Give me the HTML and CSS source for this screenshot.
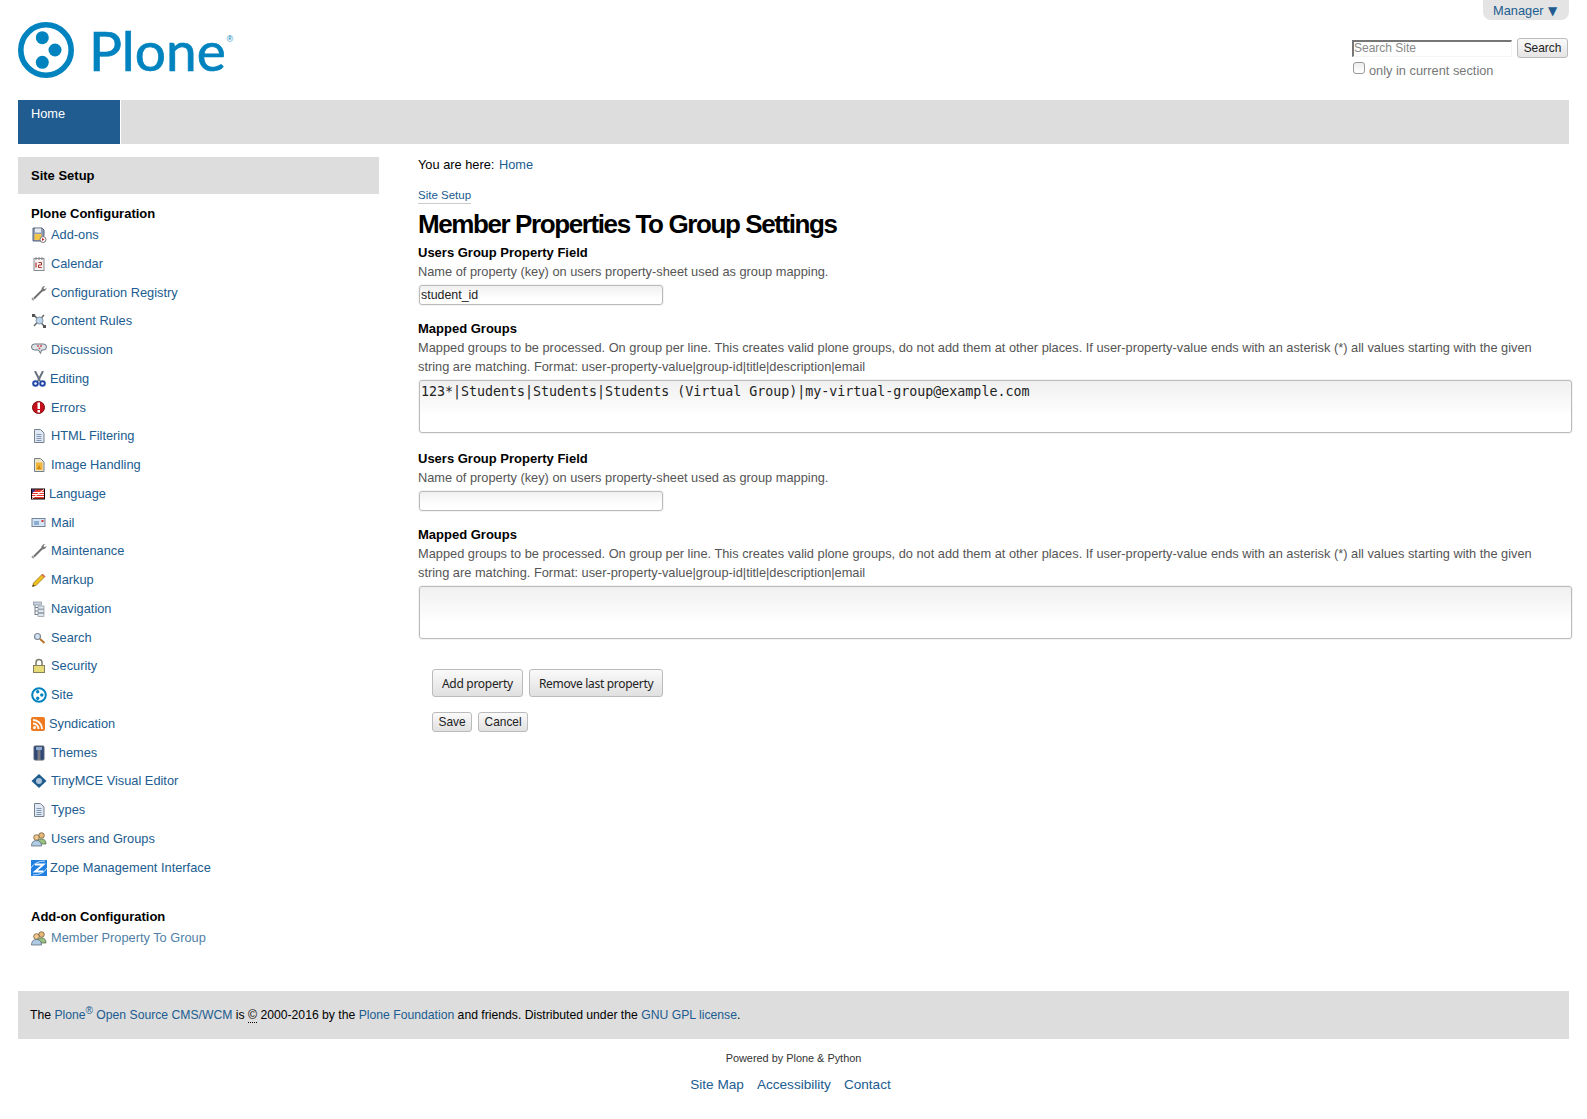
FILE: index.html
```html
<!DOCTYPE html>
<html lang="en">
<head>
    <meta charset="UTF-8">
    <title>Member Properties To Group Settings</title>
    <link rel="stylesheet" href="styles.css">
</head>
<body>
    <svg class="sprite" xmlns="http://www.w3.org/2000/svg">
        <symbol id="i-addons" viewBox="0 0 16 16"><path d="M2 1h9l2 2v5l-2 6H2z" fill="#8f9db5" stroke="#56657e"/><rect x="4" y="1.500" width="6" height="4" fill="#e9edf2"/><rect x="3.500" y="7" width="7" height="6" fill="#f3c64a"/><circle cx="12" cy="12.500" r="3" fill="#fff" stroke="#777"/><path d="M11 11l2.500 1.500L11 14z" fill="#c22"/></symbol>
        <symbol id="i-calendar" viewBox="0 0 16 16"><rect x="3" y="2.500" width="10" height="12" fill="#f4f2f0" stroke="#8a8a90"/><path d="M5 1v3M8 1v3M11 1v3" stroke="#888"/><path d="M5 6.500v5" stroke="#b3312c" stroke-width="1.200"/><path d="M7.500 6.500h3v2.500h-3v2.500h3.200" fill="none" stroke="#b3312c"/></symbol>
        <symbol id="i-wrench" viewBox="0 0 16 16"><path d="M3 13.500L12 4.500" stroke="#6f6f6f" stroke-width="2"/><path d="M1.500 12.500l2 2-1 1-1.500-.5-.5-1.500z" fill="#9a9a9a"/><path d="M10.500 5.500q-.5-2.500 1.500-4l2-.8-1.500 2.500 1 1 2.300-1.500q-.5 2-2.300 3.200-1.500.8-3 .1z" fill="#777"/></symbol>
        <symbol id="i-rules" viewBox="0 0 16 16"><path d="M3 2l10 11M13 2L3 13" stroke="#666" stroke-width="1.500"/><circle cx="8.500" cy="7.500" r="3.500" fill="#bcd2e6" stroke="#7e93a8"/><rect x="1" y="1" width="3" height="3" fill="#555"/><rect x="12" y="12" width="3" height="3" fill="#555"/></symbol>
        <symbol id="i-discussion" viewBox="0 0 16 16"><path d="M3.500 2h9Q15.500 2 15.500 5T12.500 8h-2L9.500 11.500 7.500 8h-4Q.5 8 .5 5T3.500 2z" fill="#dfe4ea" stroke="#6a7480"/><circle cx="7" cy="4" r=".9" fill="#c44"/><circle cx="10" cy="4" r=".9" fill="#c44"/><circle cx="8.500" cy="6.300" r=".9" fill="#c44"/></symbol>
        <symbol id="i-editing" viewBox="0 0 16 16"><path d="M4 0l5 10M12 0L7 10" stroke="#6b7280" stroke-width="2"/><circle cx="4.500" cy="12.500" r="2.300" fill="none" stroke="#2448a8" stroke-width="2"/><circle cx="11.500" cy="12.500" r="2.300" fill="none" stroke="#2448a8" stroke-width="2"/></symbol>
        <symbol id="i-errors" viewBox="0 0 16 16"><circle cx="7.500" cy="7.500" r="6" fill="#c4101a" stroke="#7d0a10"/><rect x="6.500" y="2.500" width="2.500" height="6.500" fill="#fff"/><rect x="6.500" y="10" width="2.500" height="2.500" fill="#fff"/></symbol>
        <symbol id="i-page" viewBox="0 0 16 16"><path d="M3.500 1.500h6l3.500 3.500v9.500H3.500z" fill="#dfe8f3" stroke="#76808c"/><path d="M5.500 6.500h5M5.500 8.500h5M5.500 10.500h5M5.500 12.500h5" stroke="#7f97b5"/></symbol>
        <symbol id="i-image" viewBox="0 0 16 16"><path d="M3.500 1.500h6l3.500 3.500v9.500H3.500z" fill="#efe6c8" stroke="#76808c"/><rect x="5" y="5.500" width="6.500" height="7.500" fill="#f0b53a"/><path d="M6 12l2-4 2 4z" fill="#c98a1a"/></symbol>
        <symbol id="i-flag" viewBox="0 0 14 11"><rect width="14" height="11" fill="#000"/><rect x="1" y="1" width="12" height="9" fill="#e8392e"/><path d="M1 4h12M1 6h12M1 8h12" stroke="#fff"/><path d="M1 1h4L1 5z" fill="#35358f"/><path d="M13 1L1 10" stroke="#fff"/></symbol>
        <symbol id="i-mail" viewBox="0 0 16 16"><rect x="1" y="3.500" width="13" height="8" fill="#d4e5f6" stroke="#72839a"/><path d="M3 7h5M3 9h5" stroke="#4477aa"/><rect x="10.500" y="5" width="2" height="2" fill="#d33"/></symbol>
        <symbol id="i-pencil" viewBox="0 0 16 16"><path d="M11.500 2L14 4.500 5 13.500l-3.500 1 1-3.500z" fill="#f0c020" stroke="#8a6a10" stroke-width=".7"/><path d="M11.500 2L14 4.500l-1 1L10.500 3z" fill="#d66"/><path d="M1.500 14.500l.6-2 1.400 1.400z" fill="#222"/></symbol>
        <symbol id="i-nav" viewBox="0 0 16 16"><path d="M4 3v11M4 6.500h3M4 10h3M4 13.500h3" stroke="#76808c"/><rect x="2.500" y="1" width="8" height="3" fill="#c9d4e2" stroke="#76808c" stroke-width=".6"/><rect x="7" y="5" width="6" height="3" fill="#dde5ee" stroke="#76808c" stroke-width=".6"/><rect x="7" y="8.700" width="6" height="3" fill="#dde5ee" stroke="#76808c" stroke-width=".6"/><rect x="7" y="12.300" width="6" height="3" fill="#dde5ee" stroke="#76808c" stroke-width=".6"/></symbol>
        <symbol id="i-search" viewBox="0 0 16 16"><circle cx="6.500" cy="6.500" r="3" fill="#d3e3f2" stroke="#7d8a99" stroke-width="1.200"/><path d="M9 9l4.500 4" stroke="#b8742a" stroke-width="2"/></symbol>
        <symbol id="i-lock" viewBox="0 0 16 16"><path d="M5 8V4.500a3 3 0 0 1 6 0V8" fill="none" stroke="#7a7a6a" stroke-width="1.500"/><rect x="2.500" y="7.500" width="11" height="7" fill="#e5db78" stroke="#85825a"/></symbol>
        <symbol id="i-plone" viewBox="0 0 16 16"><circle cx="8" cy="8" r="6.800" fill="#fff" stroke="#0083be" stroke-width="2"/><circle cx="6.700" cy="4.700" r="1.700" fill="#0083be"/><circle cx="10.800" cy="8" r="1.700" fill="#0083be"/><circle cx="6.700" cy="11.300" r="1.700" fill="#0083be"/></symbol>
        <symbol id="i-rss" viewBox="0 0 14 14"><rect width="14" height="14" rx="2" fill="#ee7a22"/><circle cx="3.500" cy="10.500" r="1.500" fill="#fff"/><path d="M2 6.500a5.500 5.500 0 0 1 5.500 5.500M2 3a9 9 0 0 1 9 9" fill="none" stroke="#fff" stroke-width="1.800"/></symbol>
        <symbol id="i-themes" viewBox="0 0 16 16"><rect x="3" y="1" width="10" height="14" rx="1" fill="#2d4778" stroke="#5a6470"/><rect x="5" y="2" width="6" height="3" fill="#8fa9cf"/><rect x="6.500" y="5" width="3" height="10" fill="#7a7a80"/></symbol>
        <symbol id="i-tiny" viewBox="0 0 16 16"><path d="M8 1l7.500 7L8 15 .5 8z" fill="#1f5c8c"/><circle cx="8" cy="8" r="3" fill="#aac3dc"/></symbol>
        <symbol id="i-users" viewBox="0 0 16 16"><circle cx="10.500" cy="4.500" r="2.800" fill="#e8b878" stroke="#5e4a2a" stroke-width=".7"/><path d="M6 13q0-5 4.500-5t4.500 5z" fill="#98c280" stroke="#4f5e42" stroke-width=".7"/><circle cx="5.500" cy="6.500" r="2.800" fill="#f0c890" stroke="#5e4a2a" stroke-width=".7"/><path d="M.5 15q0-5.500 5-5.500t5 5.500z" fill="#b0cce4" stroke="#4f5e6e" stroke-width=".7"/></symbol>
        <symbol id="i-zope" viewBox="0 0 16 16"><rect width="16" height="16" fill="#1f7fe0"/><path d="M4 4.500h8.500L4 11.500h8.500" fill="none" stroke="#fff" stroke-width="1.800"/><path d="M0 8Q4 1 14 1M16 8q-4 7-14 7" fill="none" stroke="#bfe0ff"/></symbol>
    </svg>

    <div class="page">
        <header class="site-header">
            <a class="logo" href="#">
                <svg class="logo-mark" viewBox="0 0 56 56"><circle cx="28" cy="28" r="25.200" fill="none" stroke="#0083be" stroke-width="5.600"/><circle cx="24.300" cy="15.700" r="6.500" fill="#0083be"/><circle cx="37" cy="28" r="6.500" fill="#0083be"/><circle cx="24.300" cy="40.300" r="6.500" fill="#0083be"/></svg>
                <span class="logo-text">Plone</span><span class="logo-reg">®</span>
            </a>
            <div class="header-tools">
                <a class="manager-tab" href="#">Manager <span class="manager-arrow">▼</span></a>
                <form class="search-box">
                    <div class="search-row">
                        <input class="search-input" type="text" placeholder="Search Site">
                        <button class="search-btn" type="button">Search</button>
                    </div>
                    <label class="search-section"><span class="fake-check"></span>only in current section</label>
                </form>
            </div>
        </header>

        <nav class="main-nav">
            <a class="nav-tab" href="#">Home</a>
        </nav>

        <div class="columns">
            <aside class="sidebar">
                <div class="sidebar-title">Site Setup</div>
                <h3 class="sidebar-head">Plone Configuration</h3>
                <ul class="setup-list">
                    <li><a href="#"><svg class="ico"><use href="#i-addons"/></svg>Add-ons</a></li>
                    <li><a href="#"><svg class="ico"><use href="#i-calendar"/></svg>Calendar</a></li>
                    <li><a href="#"><svg class="ico"><use href="#i-wrench"/></svg>Configuration Registry</a></li>
                    <li><a href="#"><svg class="ico"><use href="#i-rules"/></svg>Content Rules</a></li>
                    <li><a href="#"><svg class="ico"><use href="#i-discussion"/></svg>Discussion</a></li>
                    <li><a href="#"><svg class="ico ico-narrow"><use href="#i-editing"/></svg>Editing</a></li>
                    <li><a href="#"><svg class="ico"><use href="#i-errors"/></svg>Errors</a></li>
                    <li><a href="#"><svg class="ico"><use href="#i-page"/></svg>HTML Filtering</a></li>
                    <li><a href="#"><svg class="ico"><use href="#i-image"/></svg>Image Handling</a></li>
                    <li><a href="#"><svg class="ico ico-flat"><use href="#i-flag"/></svg>Language</a></li>
                    <li><a href="#"><svg class="ico"><use href="#i-mail"/></svg>Mail</a></li>
                    <li><a href="#"><svg class="ico"><use href="#i-wrench"/></svg>Maintenance</a></li>
                    <li><a href="#"><svg class="ico"><use href="#i-pencil"/></svg>Markup</a></li>
                    <li><a href="#"><svg class="ico"><use href="#i-nav"/></svg>Navigation</a></li>
                    <li><a href="#"><svg class="ico"><use href="#i-search"/></svg>Search</a></li>
                    <li><a href="#"><svg class="ico"><use href="#i-lock"/></svg>Security</a></li>
                    <li><a href="#"><svg class="ico"><use href="#i-plone"/></svg>Site</a></li>
                    <li><a href="#"><svg class="ico ico-flat"><use href="#i-rss"/></svg>Syndication</a></li>
                    <li><a href="#"><svg class="ico"><use href="#i-themes"/></svg>Themes</a></li>
                    <li><a href="#"><svg class="ico"><use href="#i-tiny"/></svg>TinyMCE Visual Editor</a></li>
                    <li><a href="#"><svg class="ico"><use href="#i-page"/></svg>Types</a></li>
                    <li><a href="#"><svg class="ico"><use href="#i-users"/></svg>Users and Groups</a></li>
                    <li><a href="#"><svg class="ico ico-narrow"><use href="#i-zope"/></svg>Zope Management Interface</a></li>
                </ul>
                <h3 class="sidebar-head addon-head">Add-on Configuration</h3>
                <ul class="setup-list">
                    <li><a class="visited" href="#"><svg class="ico"><use href="#i-users"/></svg>Member Property To Group</a></li>
                </ul>
            </aside>

            <main class="content">
                <div class="breadcrumbs">You are here: <a href="#">Home</a></div>
                <a class="up-link" href="#">Site Setup</a>
                <h1 class="page-title">Member Properties To Group Settings</h1>

                <div class="field">
                    <label class="field-label">Users Group Property Field</label>
                    <div class="field-help">Name of property (key) on users property-sheet used as group mapping.</div>
                    <input class="text-input" type="text" value="student_id">
                </div>
                <div class="field field-tall">
                    <label class="field-label">Mapped Groups</label>
                    <div class="field-help">Mapped groups to be processed. On group per line. This creates valid plone groups, do not add them at other places. If user-property-value ends with an asterisk (*) all values starting with the given string are matching. Format: user-property-value|group-id|title|description|email</div>
                    <textarea class="text-area">123*|Students|Students|Students (Virtual Group)|my-virtual-group@example.com</textarea>
                </div>
                <div class="field">
                    <label class="field-label">Users Group Property Field</label>
                    <div class="field-help">Name of property (key) on users property-sheet used as group mapping.</div>
                    <input class="text-input" type="text">
                </div>
                <div class="field field-tall">
                    <label class="field-label">Mapped Groups</label>
                    <div class="field-help">Mapped groups to be processed. On group per line. This creates valid plone groups, do not add them at other places. If user-property-value ends with an asterisk (*) all values starting with the given string are matching. Format: user-property-value|group-id|title|description|email</div>
                    <textarea class="text-area"></textarea>
                </div>

                <div class="prop-buttons">
                    <button class="btn btn-large" type="button">Add property</button>
                    <button class="btn btn-large" type="button">Remove last property</button>
                </div>
                <div class="form-buttons">
                    <button class="btn" type="button">Save</button>
                    <button class="btn" type="button">Cancel</button>
                </div>
            </main>
        </div>

        <footer class="site-footer">
            <div class="colophon">The <a href="#">Plone<sup>®</sup> Open Source CMS/WCM</a> is <abbr>©</abbr> 2000-2016 by the <a href="#">Plone Foundation</a> and friends. Distributed under the <a href="#">GNU GPL license</a>.</div>
            <div class="powered">Powered by Plone &amp; Python</div>
            <div class="site-actions">
                <a href="#">Site Map</a>
                <a href="#">Accessibility</a>
                <a href="#">Contact</a>
            </div>
        </footer>
    </div>
</body>
</html>
```

FILE: styles.css
```css
* {
    box-sizing: border-box;
}

body {
    margin: 0;
    background-color: white;
    color: black;
    font-family: "Liberation Sans", Arial, sans-serif;
    font-size: 12.800px;
    line-height: 20px;
}

a {
    color: #205c90;
    text-decoration: none;
}

.sprite {
    display: none;
}

.page {
    padding: 0 18px;
}

/* header */
.site-header {
    display: flex;
    justify-content: space-between;
    height: 100px;
}

.logo {
    display: flex;
    align-items: flex-start;
    padding-top: 22px;
    color: #0083be;
}

.logo-mark {
    width: 56px;
    height: 56px;
}

.logo-text {
    margin-left: 15px;
    font-family: Lato, sans-serif;
    font-size: 55px;
    line-height: 56px;
    -webkit-text-stroke: 0.7px #0083be;
}

.logo-reg {
    margin: 11px 0 0 1px;
    font-size: 8.500px;
    line-height: 12px;
}

.header-tools {
    display: flex;
    flex-direction: column;
    align-items: flex-end;
}

.manager-tab {
    width: 86px;
    height: 20px;
    padding: 0 0 0 10px;
    background-color: #e4e4e4;
    border-radius: 0 0 8px 8px;
    line-height: 21px;
    white-space: nowrap;
}

.manager-arrow {
    margin-left: 1px;
    font-family: "DejaVu Sans", sans-serif;
    font-size: 12px;
}

.search-box {
    margin-top: 18px;
    width: 217px;
    padding-right: 1px;
}

.search-row {
    display: flex;
    justify-content: space-between;
    align-items: center;
}

.search-input {
    width: 160px;
    height: 17px;
    margin: 0;
    padding: 0 0 2px;
    border-style: solid;
    border-width: 2px 1px 1px 2px;
    border-color: #767676 #f4f4f4 #f4f4f4 #767676;
    background-color: white;
    font-family: "Liberation Sans", sans-serif;
    font-size: 12px;
    line-height: 12px;
}

.search-input::placeholder {
    color: #8a8a8a;
}

.search-btn {
    width: 51px;
    height: 20px;
    padding: 0;
    border: 1px solid #bbb;
    border-radius: 3px;
    background: linear-gradient(#fafafa, #e4e4e4);
    color: #222;
    font-family: "Liberation Sans", sans-serif;
    font-size: 11.900px;
}

.search-section {
    display: flex;
    align-items: flex-start;
    margin-top: 3px;
    padding-left: 1px;
    color: #777;
    font-size: 12.800px;
    line-height: 20px;
}

.fake-check {
    width: 12px;
    height: 12px;
    margin: 1px 4px 0 0;
    border: 1px solid #999;
    border-radius: 3px;
    background: linear-gradient(#eee, #fff);
}

/* nav */
.main-nav {
    height: 44px;
    background-color: #ddd;
}

.nav-tab {
    display: block;
    width: 103px;
    height: 44px;
    padding: 4px 13px;
    background-color: #205c90;
    border-right: 1px solid white;
    color: white;
}

.columns {
    display: flex;
    margin-top: 13px;
}

/* sidebar */
.sidebar {
    flex: none;
    width: 361px;
    margin-right: 39px;
}

.sidebar-title {
    height: 37px;
    padding-left: 13px;
    background-color: #ddd;
    font-size: 13px;
    font-weight: bold;
    line-height: 37px;
}

.sidebar-head {
    margin: 9px 0 0 13px;
    font-size: 13px;
    line-height: 21px;
}

.addon-head {
    margin-top: 20px;
}

.setup-list {
    margin: 1px 0 0 13px;
    padding: 0;
    list-style: none;
}

.setup-list li {
    height: 28.750px;
}

.setup-list a {
    display: flex;
    align-items: center;
    height: 20px;
}

.setup-list a.visited {
    color: #4f7fa6;
}

.ico {
    flex: none;
    width: 16px;
    height: 16px;
    margin-right: 4px;
}

.ico-narrow {
    margin-right: 3px;
}

.ico-flat {
    width: 14px;
    height: 14px;
}

/* content */
.content {
    flex: 1;
    min-width: 0;
}

.breadcrumbs {
    height: 16px;
    line-height: 16px;
}

.breadcrumbs a {
    margin-left: 1px;
}

.up-link {
    display: inline-block;
    margin-top: 14px;
    border-bottom: 1px solid #ccc;
    font-size: 11.500px;
    line-height: 16px;
}

.page-title {
    margin: 1px 0 1px;
    font-size: 26px;
    line-height: 36px;
    letter-spacing: -1.400px;
}

.field {
    margin-bottom: 14px;
}

.field-tall {
    margin-bottom: 16px;
}

.field-label {
    display: block;
    font-size: 13px;
    font-weight: bold;
    line-height: 19px;
}

.field-help {
    max-width: 1125px;
    color: #555;
    font-size: 12.800px;
    line-height: 19px;
}

.text-input {
    display: block;
    width: 244px;
    height: 20px;
    margin: 4px 0 0 1px;
    padding: 0 1px;
    border: 1px solid #bbb;
    border-radius: 3px;
    background: linear-gradient(#f0f0f0, #fff 70%);
    box-shadow: 0 0 0 1px #f3f3f3;
    color: #222;
    font-family: "Liberation Sans", sans-serif;
    font-size: 12.400px;
}

.text-area {
    display: block;
    width: 1153px;
    height: 53px;
    margin: 4px 0 0 1px;
    padding: 1px;
    border: 1px solid #bbb;
    border-radius: 3px;
    background: linear-gradient(#f0f0f0, #fff 70%);
    box-shadow: 0 0 0 1px #f3f3f3;
    color: #222;
    font-family: "DejaVu Sans Mono", monospace;
    font-size: 13.300px;
    line-height: 19px;
    resize: none;
}

.prop-buttons {
    display: flex;
    gap: 6px;
    margin: 30px 0 0 14px;
}

.form-buttons {
    display: flex;
    gap: 6px;
    margin: 15px 0 0 14px;
}

.btn {
    height: 20px;
    padding: 0 5.500px;
    border: 1px solid #bbb;
    border-radius: 3px;
    background: linear-gradient(#fafafa, #e0e0e0);
    color: #222;
    font-family: "Liberation Sans", sans-serif;
    font-size: 11.900px;
}

.btn-large {
    height: 28px;
    padding: 0 9px;
    font-family: "Noto Sans", sans-serif;
    font-size: 12px;
    letter-spacing: -0.300px;
}

/* footer */
.site-footer {
    margin-top: 34px;
}

.colophon {
    height: 48px;
    padding: 0 12px;
    background-color: #ddd;
    font-size: 12.200px;
    line-height: 48px;
}

.colophon sup {
    font-size: 10px;
    line-height: 0;
}

.colophon abbr {
    border-bottom: 1px dotted black;
}

.powered {
    margin-top: 9px;
    color: #333;
    font-size: 10.900px;
    line-height: 20px;
    text-align: center;
}

.site-actions {
    display: flex;
    justify-content: center;
    gap: 13px;
    height: 27px;
    margin-top: 7px;
    padding-right: 6px;
    font-size: 13.600px;
}
```
